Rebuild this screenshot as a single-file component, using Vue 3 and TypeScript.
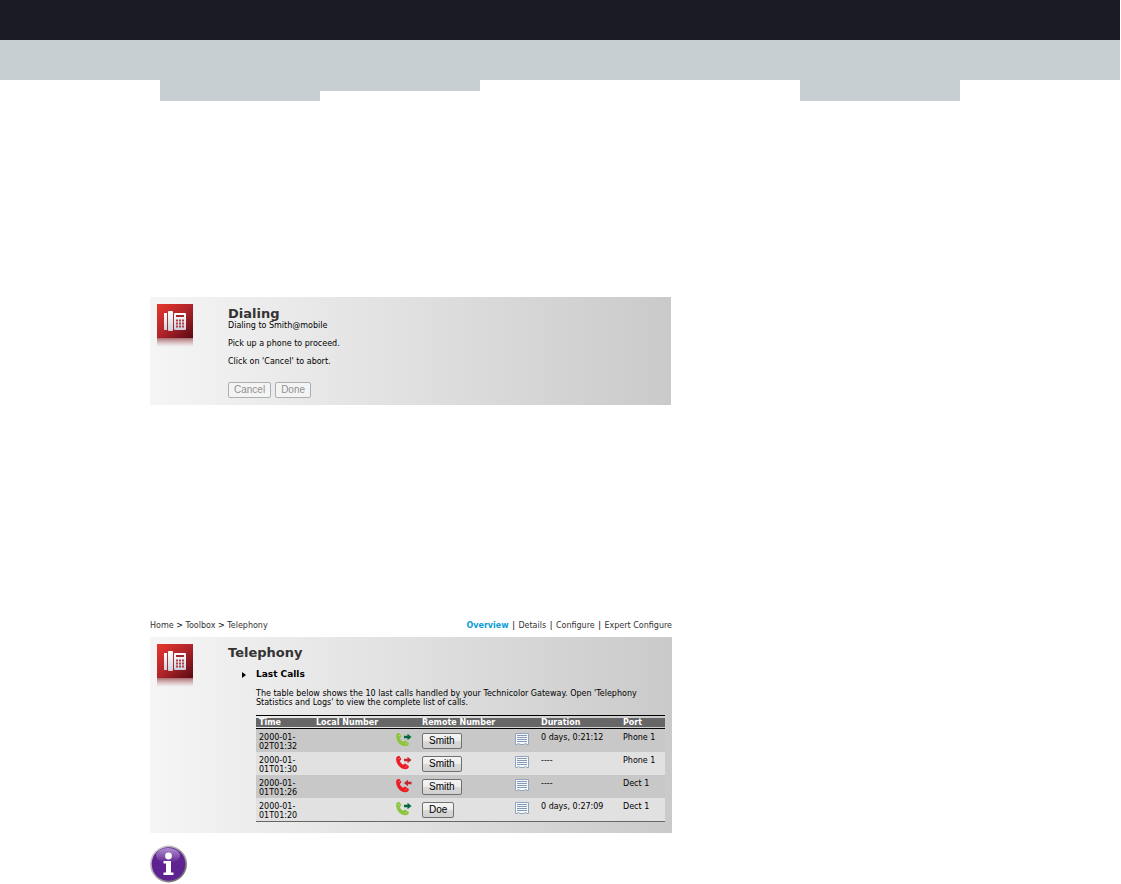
<script setup lang="ts">
interface Call {
  time: [string, string]
  kind: 'ok' | 'missed'
  direction: 'out' | 'in'
  remote: string
  duration: string
  port: string
}

const calls: Call[] = [
  { time: ['2000-01-', '02T01:32'], kind: 'ok', direction: 'out', remote: 'Smith', duration: '0 days, 0:21:12', port: 'Phone 1' },
  { time: ['2000-01-', '01T01:30'], kind: 'missed', direction: 'out', remote: 'Smith', duration: '----', port: 'Phone 1' },
  { time: ['2000-01-', '01T01:26'], kind: 'missed', direction: 'in', remote: 'Smith', duration: '----', port: 'Dect 1' },
  { time: ['2000-01-', '01T01:20'], kind: 'ok', direction: 'out', remote: 'Doe', duration: '0 days, 0:27:09', port: 'Dect 1' },
]

const crumbs: string[] = ['Home', 'Toolbox', 'Telephony']
const views: string[] = ['Overview', 'Details', 'Configure', 'Expert Configure']
</script>

<template>
  <div class="page">
    <svg class="defs" width="0" height="0" aria-hidden="true">
      <defs>
        <linearGradient id="red" x1="0" y1="0" x2="1" y2="1">
          <stop offset="0" stop-color="#e8382c" />
          <stop offset="0.5" stop-color="#b0242a" />
          <stop offset="1" stop-color="#580a14" />
        </linearGradient>
        <linearGradient id="mirror" x1="0" y1="0" x2="0" y2="1">
          <stop offset="0" stop-color="#8c3038" stop-opacity="0.7" />
          <stop offset="1" stop-color="#c08080" stop-opacity="0" />
        </linearGradient>
        <linearGradient id="handset" x1="0" y1="0" x2="0" y2="1">
          <stop offset="0" stop-color="#fff" />
          <stop offset="1" stop-color="#cdd0dc" />
        </linearGradient>
        <symbol id="phone" viewBox="0 0 36 44">
          <rect width="36" height="34" fill="url(#red)" />
          <rect y="34" width="36" height="9" fill="url(#mirror)" />
          <rect x="7" y="9" width="3" height="17" fill="url(#handset)" />
          <rect x="11" y="7" width="5" height="20" rx="1" fill="url(#handset)" />
          <rect x="17" y="9" width="12" height="17" rx="1" fill="url(#handset)" />
          <rect x="19" y="11" width="8" height="2" fill="#a8242c" />
          <path d="M19 16.500h2m1 0h2m1 0h2M19 19.500h2m1 0h2m1 0h2M19 22.500h2m1 0h2m1 0h2" stroke="#b33a44" stroke-width="2" />
        </symbol>
        <symbol id="receiver" viewBox="0 0 16 14">
          <path d="M.2 1.900C.8.500 2.300-.1 3.700.2l1.800 3-1.700 1.900c.6 1.600 1.700 2.800 3.200 3.600l2-1.100 3.900 2.300c.2 1.800-1.500 3.300-3.500 3.300C4.300 13.200-.4 7.700.2 1.900z" fill="currentColor" />
          <path d="M2.200 3l2-.9M9.200 11.400l1.500-1.500" stroke="#fff" stroke-opacity=".4" stroke-width=".9" />
        </symbol>
      </defs>
    </svg>

    <header>
      <div class="dark"></div>
      <div class="grey"></div>
      <div class="steps">
        <i class="deep a"></i><i class="shallow"></i><i class="deep b"></i>
      </div>
    </header>

    <main>
      <section class="panel dialing">
        <svg class="logo" viewBox="0 0 36 44"><use href="#phone" /></svg>
        <div class="body">
          <h1>Dialing</h1>
          <p>Dialing to Smith@mobile</p>
          <p>Pick up a phone to proceed.</p>
          <p>Click on 'Cancel' to abort.</p>
          <div class="actions">
            <button type="button" disabled>Cancel</button>
            <button type="button" disabled>Done</button>
          </div>
        </div>
      </section>

      <div class="bar">
        <nav aria-label="Breadcrumb">
          <template v-for="(c, i) in crumbs" :key="c"><span v-if="i"> &gt; </span><a href="#">{{ c }}</a></template>
        </nav>
        <nav class="views" aria-label="Views">
          <template v-for="(v, i) in views" :key="v"><span v-if="i"> | </span><a href="#" :class="{ current: i === 0 }">{{ v }}</a></template>
        </nav>
      </div>

      <section class="panel telephony">
        <svg class="logo" viewBox="0 0 36 44"><use href="#phone" /></svg>
        <div class="body">
          <h1>Telephony</h1>
          <h2><svg viewBox="0 0 4 6"><path d="M0 0l4 3-4 3z" /></svg>Last Calls</h2>
          <div class="inner">
            <p>The table below shows the 10 last calls handled by your Technicolor Gateway. Open 'Telephony<br />Statistics and Logs' to view the complete list of calls.</p>
            <table>
              <colgroup>
                <col class="c-time" /><col class="c-local" /><col class="c-icon" /><col class="c-remote" /><col class="c-icon" /><col class="c-duration" /><col />
              </colgroup>
              <thead>
                <tr>
                  <th><span>Time</span></th>
                  <th><span>Local Number</span></th>
                  <th></th>
                  <th><span>Remote Number</span></th>
                  <th></th>
                  <th><span>Duration</span></th>
                  <th><span>Port</span></th>
                </tr>
              </thead>
              <tbody>
                <tr v-for="(c, i) in calls" :key="i">
                  <td>{{ c.time[0] }}<br />{{ c.time[1] }}</td>
                  <td></td>
                  <td>
                    <svg class="call" :class="c.kind" viewBox="0 0 16 14">
                      <use href="#receiver" />
                      <path v-if="c.direction === 'out'" class="arrow" d="M8 2.800h3.500V.8L15.500 4l-4 3.200v-2H8z" />
                      <path v-else class="arrow" d="M15.500 2.800h-3.500V.8L8 4l4 3.200v-2h3.500z" />
                    </svg>
                  </td>
                  <td><button type="button">{{ c.remote }}</button></td>
                  <td>
                    <svg class="book" viewBox="0 0 14 12">
                      <path d="M.5.5h13v11h-2l-1-1.500-1 1.500h-5l-1-1.500-1 1.500h-2z" fill="#f6f9fc" stroke="#93a5bb" />
                      <path d="M2 2.500h10M2 4.500h10M2 6.500h10M2 8.500h10" stroke="#8499b4" />
                    </svg>
                  </td>
                  <td>{{ c.duration }}</td>
                  <td>{{ c.port }}</td>
                </tr>
              </tbody>
            </table>
          </div>
        </div>
      </section>

      <svg class="info" viewBox="0 0 38 38" role="img" aria-label="Information">
        <defs>
          <linearGradient id="rim" x1="0" y1="0" x2="1" y2="1">
            <stop offset="0" stop-color="#d8d8d8" />
            <stop offset="0.5" stop-color="#a9a9a9" />
            <stop offset="1" stop-color="#555" />
          </linearGradient>
          <linearGradient id="gloss" x1="0" y1="0" x2="0" y2="1">
            <stop offset="0" stop-color="#b08fd0" />
            <stop offset="1" stop-color="#5e2391" />
          </linearGradient>
        </defs>
        <circle cx="18.500" cy="19" r="18.500" fill="url(#rim)" />
        <circle cx="18.500" cy="19" r="16.800" fill="#5e2391" />
        <ellipse cx="18" cy="10.500" rx="12" ry="7.500" fill="url(#gloss)" />
        <circle cx="18.500" cy="11" r="3.400" fill="#fff" />
        <path d="M13.500 16H21v11.500h2.500V30h-10v-2.500H16v-9h-2.500z" fill="#fff" />
      </svg>
    </main>
  </div>
</template>

<style>
body {
  margin: 0;
  background: #fff;
}
</style>

<style scoped>
.page {
  font-family: "DejaVu Sans", Verdana, sans-serif;
  font-size: 8px;
  line-height: 9px;
  color: #000;
}
.defs {
  display: block;
}
header {
  margin-right: 1px;
}
.dark {
  height: 40px;
  background: #1a1b24;
}
.grey {
  height: 40px;
  background: #c7cfd2;
}
.steps {
  display: grid;
  grid-template-columns: repeat(7, 1fr);
  align-items: start;
  height: 22px;
}
.steps i {
  background: #c7cfd2;
}
.deep {
  height: 21px;
}
.shallow {
  height: 11px;
}
.a {
  grid-column: 2;
}
.b {
  grid-column: 6;
}
main {
  max-width: 522px;
  margin-left: 150px;
  padding-top: 195px;
}
.panel {
  display: flex;
  align-items: flex-start;
  box-sizing: border-box;
  background: linear-gradient(90deg, #f5f5f5, #e0e0e0 50%, #cacaca);
}
.logo {
  flex: none;
  width: 36px;
  height: 44px;
  margin: 7px 35px 0 7px;
}
.body {
  flex: 1;
  min-width: 0;
}
h1 {
  margin: 0;
  font-size: 13px;
  line-height: 15px;
  color: #333;
}
p {
  margin: 0;
}
.dialing {
  margin-right: 1px;
  padding-bottom: 7px;
}
.dialing .body {
  padding-top: 9px;
}
.dialing p {
  margin-bottom: 9px;
}
.actions {
  display: flex;
  gap: 4px;
  margin-top: 16px;
}
button {
  box-sizing: border-box;
  height: 16px;
  margin: 0;
  padding: 0 6px;
  border: 1px solid #707070;
  border-radius: 2px;
  background: linear-gradient(#f4f4f4, #ececec 50%, #dadada 50%, #d0d0d0);
  font-family: "Liberation Sans", Arial, sans-serif;
  font-size: 10px;
  line-height: 14px;
  color: #000;
}
button:disabled {
  padding: 0 5px;
  border-color: #a9b0b3;
  background: #f4f4f4;
  color: #909090;
}
.bar {
  display: flex;
  justify-content: space-between;
  margin-top: 216px;
  padding-bottom: 7px;
  white-space: pre;
}
.views span {
  margin: 0 1px;
}
a {
  color: #333;
  text-decoration: none;
}
.current {
  color: #0b9bd7;
  font-weight: bold;
}
.telephony {
  padding-bottom: 11px;
}
.telephony .body {
  padding-top: 8px;
}
h2 {
  display: flex;
  align-items: center;
  gap: 10px;
  margin: 9px 0;
  padding-left: 14px;
  font-size: 9px;
  line-height: 11px;
}
h2 svg {
  width: 4px;
  height: 6px;
}
.inner {
  padding: 0 7px 0 28px;
}
table {
  width: 100%;
  margin-top: 8px;
  border-top: 1px solid #000;
  border-bottom: 1px solid #666;
  border-collapse: separate;
  border-spacing: 0;
  table-layout: fixed;
}
.c-time {
  width: 57px;
}
.c-local {
  width: 80px;
}
.c-icon {
  width: 26px;
}
.c-remote {
  width: 93px;
}
.c-duration {
  width: 82px;
}
th {
  height: 9px;
  padding: 2px 0 1px;
  border-bottom: 1px solid #000;
  background: #666;
  background-clip: content-box;
  font-size: 8px;
  line-height: 9px;
  color: #fff;
  text-align: left;
  white-space: nowrap;
}
th span {
  padding-left: 3px;
}
td {
  box-sizing: border-box;
  height: 23px;
  padding: 4px 0 0 3px;
  vertical-align: top;
  white-space: nowrap;
}
tbody tr:nth-child(odd) {
  background: #c8c8c8;
}
tbody tr:nth-child(even) {
  background: #e1e1e1;
}
td svg,
td button {
  display: block;
}
.call {
  width: 16px;
  height: 14px;
}
.ok {
  color: #8cc63f;
}
.ok .arrow {
  fill: #00693c;
}
.missed {
  color: #ed1c24;
}
.missed .arrow {
  fill: #c1272d;
}
.book {
  width: 14px;
  height: 12px;
}
.info {
  display: block;
  width: 38px;
  height: 38px;
  margin-top: 12px;
}
</style>
